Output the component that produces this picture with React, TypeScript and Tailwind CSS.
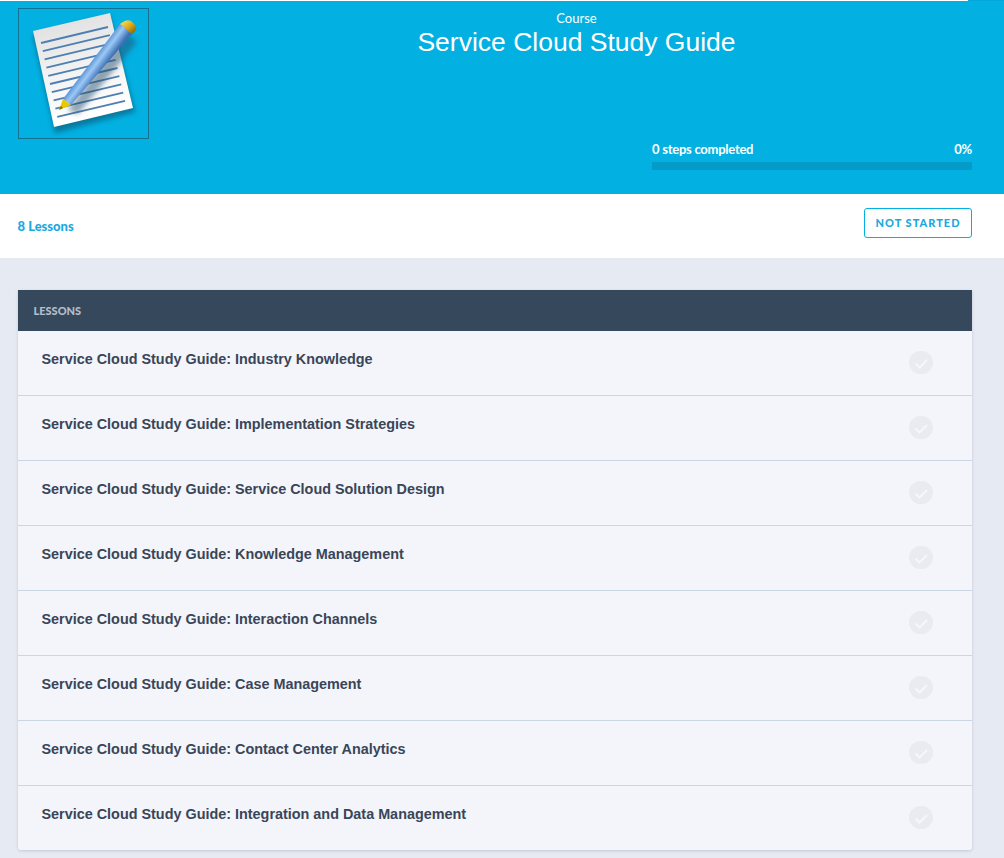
const lessons = [
  "Industry Knowledge",
  "Implementation Strategies",
  "Service Cloud Solution Design",
  "Knowledge Management",
  "Interaction Channels",
  "Case Management",
  "Contact Center Analytics",
  "Integration and Data Management",
];

function Logo() {
  const lines = Array.from({ length: 10 }, (_, i) => i);
  return (
    <svg viewBox="0 0 131 131" width="131" height="131" className="block">
      <defs>
        <linearGradient id="paper" x1="0" y1="0" x2="0.25" y2="1">
          <stop offset="0" stopColor="#dcdcdc" />
          <stop offset="0.55" stopColor="#f2f2f2" />
          <stop offset="1" stopColor="#ffffff" />
        </linearGradient>
        <linearGradient id="pen" gradientUnits="userSpaceOnUse" x1="72" y1="53" x2="84" y2="62">
          <stop offset="0" stopColor="#4f8ad4" />
          <stop offset="0.45" stopColor="#9cc8f4" />
          <stop offset="1" stopColor="#3b70b6" />
        </linearGradient>
        <linearGradient id="cap" gradientUnits="userSpaceOnUse" x1="106" y1="13" x2="116" y2="24">
          <stop offset="0" stopColor="#f5d657" />
          <stop offset="0.55" stopColor="#d9a514" />
          <stop offset="1" stopColor="#8f6a08" />
        </linearGradient>
        <filter id="soft" x="-20%" y="-20%" width="140%" height="140%">
          <feGaussianBlur stdDeviation="2.5" />
        </filter>
      </defs>
      <polygon points="15,27 92,8 117,104 37,125" fill="#07526e" opacity="0.6" filter="url(#soft)" />
      <polygon points="15,23 92,5 115,100 36,119" fill="url(#paper)" />
      {lines.map((i) => (
        <line
          key={i}
          x1={23 + i * 1.8}
          y1={35 + i * 8.2}
          x2={90 + i * 1.9}
          y2={19 + i * 8.2}
          stroke="#4f7fb0"
          strokeWidth="1.8"
        />
      ))}
      <polygon points="50,102 60,106 119,34 108,24" fill="#26506f" opacity="0.5" filter="url(#soft)" />
      <polygon points="45,91 53,97 114,26 102,16" fill="url(#pen)" />
      <polygon points="45,91 53,97 41,102" fill="#e8c800" />
      <polygon points="41,102 43,98 45,100" fill="#7a6a10" />
      <path d="M102,16 L105,14 Q109,11 113,13 L117,17 Q119,20 117,23 L114,26 Z" fill="url(#cap)" />
    </svg>
  );
}

function Check() {
  return (
    <div className="flex h-[23px] w-6 items-center justify-center rounded-full bg-[#e9ebf0]">
      <svg viewBox="0 0 24 24" width="24" height="24" fill="none">
        <path d="M6.5 12.5 L10.5 16.5 L18 9" stroke="#f6f7fa" strokeWidth="2.2" />
      </svg>
    </div>
  );
}

export default function App() {
  return (
    <div className="h-[858px] overflow-hidden bg-[#e6eaf2] font-['Lato',sans-serif]">
      <header className="relative flex h-[194px] items-start bg-[#03b0e2] pl-[18px] pr-8 pt-2">
        <div className="absolute left-0 top-0 h-px w-[968px] bg-white" />
        <div className="absolute right-0 top-0 h-px w-9 bg-[#03a6d6]" />
        <div className="h-[131px] w-[131px] shrink-0 border border-[#16708f]">
          <div className="-m-px">
            <Logo />
          </div>
        </div>
        <div className="absolute left-0 top-[11px] flex w-[1153px] flex-col items-center text-white">
          <div className="text-[13px] leading-[15px]">Course</div>
          <h1 className="mt-px font-['Liberation_Sans',sans-serif] text-[26.5px] leading-[31px]">
            Service Cloud Study Guide
          </h1>
        </div>
        <div className="absolute right-8 top-[141px] w-[320px] text-white">
          <div className="flex justify-between text-[13px] font-bold leading-4 tracking-[-0.25px]">
            <span>0 steps completed</span>
            <span>0%</span>
          </div>
          <div className="mt-[5px] h-2 bg-[#049bc8]" />
        </div>
      </header>
      <div className="flex h-[64px] items-start justify-between bg-white pl-[17.5px] pr-8">
        <span className="mt-[25px] text-[13px] font-black leading-[15px] text-[#1ba8e0]">8 Lessons</span>
        <span className="mt-[14px] flex h-[30px] w-[108px] items-center justify-center rounded-[3px] border border-[#03b0e2] text-[11px] font-black tracking-[1px] text-[#1ba8e0]">
          NOT STARTED
        </span>
      </div>
      <section className="mx-[18px] mr-8 mt-8 rounded-b-[3px] shadow-[0_1px_3px_rgba(90,100,120,0.25)]">
        <div className="flex h-[41px] items-center bg-[#36495c] pl-[15.5px] pt-[2px] text-[11px] font-black text-[#b4bdca]">
          LESSONS
        </div>
        {lessons.map((l, i) => (
          <div
            key={l}
            className={`flex justify-between bg-[#f3f5fa] pl-[23.5px] pr-[39px] ${
              i < lessons.length - 1 ? "h-[65px] border-b border-[#c9d6e4]" : "h-[64px] rounded-b-[3px]"
            }`}
          >
            <span className="mt-[19px] font-['Liberation_Sans',sans-serif] text-[14.4px] font-bold leading-[18px] text-[#3a4558]">
              Service Cloud Study Guide: {l}
            </span>
            <div className="mt-5">
              <Check />
            </div>
          </div>
        ))}
      </section>
    </div>
  );
}
